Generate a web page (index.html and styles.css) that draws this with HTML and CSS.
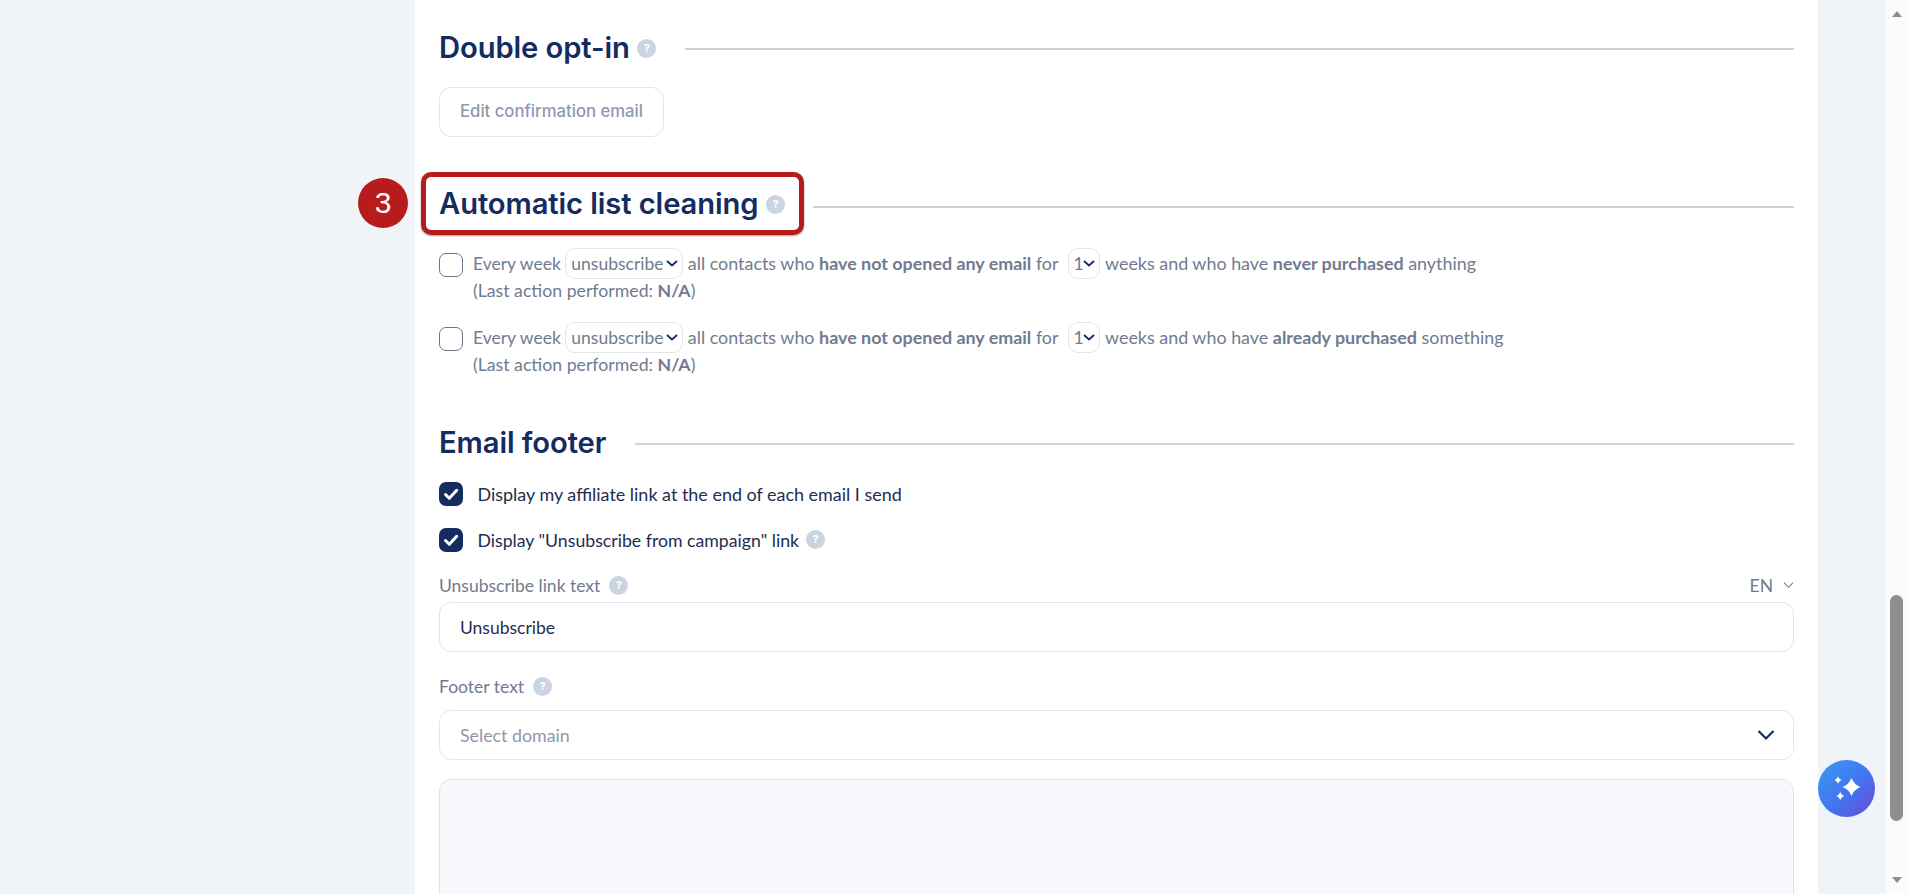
FILE: index.html
```html
<!DOCTYPE html>
<html lang="en">
<head>
<meta charset="utf-8">
<title>Email settings</title>
<link rel="stylesheet" href="styles.css">
</head>
<body>
<div class="page">
  <main class="card">
    <div class="heading first"><h2>Double opt-in</h2><span class="help">?</span><span class="rule"></span></div>
    <button class="btn"><span>Edit confirmation email</span></button>

    <div class="heading second"><h2>Automatic list cleaning</h2><span class="help">?</span><span class="rule"></span>
      <span class="marker"></span><span class="badge">3</span>
    </div>

    <div class="clean-row">
      <span class="check"></span>
      <div class="clean-text">
        <div class="line"><span class="lead">Every week</span><select class="sel sel-action"><option>unsubscribe</option></select><span>all contacts who <b>have not opened any email</b> for</span><select class="sel sel-num"><option>1</option></select><span>weeks and who have <b>never purchased</b> anything</span></div>
        <div class="line2">(Last action performed: <b>N/A</b>)</div>
      </div>
    </div>
    <div class="clean-row next">
      <span class="check"></span>
      <div class="clean-text">
        <div class="line"><span class="lead">Every week</span><select class="sel sel-action"><option>unsubscribe</option></select><span>all contacts who <b>have not opened any email</b> for</span><select class="sel sel-num"><option>1</option></select><span>weeks and who have <b>already purchased</b> something</span></div>
        <div class="line2">(Last action performed: <b>N/A</b>)</div>
      </div>
    </div>

    <div class="heading third"><h2>Email footer</h2><span class="rule"></span></div>

    <div class="opt">
      <span class="check on"><svg viewBox="0 0 24 24" width="24" height="24"><path d="M6.500 12.500l3.800 3.800 7.400-8" fill="none" stroke="#fff" stroke-width="3" stroke-linecap="round" stroke-linejoin="round"/></svg></span>
      <span>Display my affiliate link at the end of each email I send</span>
    </div>
    <div class="opt tight">
      <span class="check on"><svg viewBox="0 0 24 24" width="24" height="24"><path d="M6.500 12.500l3.800 3.800 7.400-8" fill="none" stroke="#fff" stroke-width="3" stroke-linecap="round" stroke-linejoin="round"/></svg></span>
      <span>Display "Unsubscribe from campaign" link</span><span class="help">?</span>
    </div>

    <div class="label-row">
      <span class="label">Unsubscribe link text</span><span class="help">?</span>
      <span class="lang">EN <svg viewBox="0 0 12 8" width="11" height="8"><path d="M1 1.500l5 5 5-5" fill="none" stroke="#707b90" stroke-width="1.200"/></svg></span>
    </div>
    <div class="field">Unsubscribe</div>

    <div class="label-row footer-label">
      <span class="label">Footer text</span><span class="help">?</span>
    </div>
    <div class="field domain">
      <span>Select domain</span>
      <svg viewBox="0 0 18 12" width="18" height="12"><path d="M1.500 2l7.500 7.500L16.500 2" fill="none" stroke="#142c5f" stroke-width="2.200"/></svg>
    </div>
    <div class="textarea"></div>
  </main>
  <div class="margin"></div>
  <aside class="scrollbar">
    <span class="arrow up"></span>
    <span class="thumb"></span>
    <span class="arrow down"></span>
  </aside>
</div>
<button class="spark" aria-label="AI assistant">
  <svg viewBox="0 0 57 57" width="57" height="57">
    <path d="M33.500 18Q36 24.500 42.500 27 36 29.500 33.500 36 31 29.500 24.500 27 31 24.500 33.500 18z" fill="#fff"/>
    <path d="M20 16.500Q21 19 23.500 20 21 21 20 23.500 19 21 16.500 20 19 19 20 16.500z" fill="#fff"/>
    <path d="M22.300 32Q23.300 35 26.300 36 23.300 37 22.300 40 21.300 37 18.300 36 21.300 35 22.300 32z" fill="#fff"/>
  </svg>
</button>
</body>
</html>
```
FILE: styles.css
```css
* { box-sizing: border-box; }
html, body { margin: 0; height: 894px; overflow: hidden; }
body { background: #f0f4f9; font-family: "Lato", "Noto Sans", sans-serif; }
.page { display: flex; height: 894px; padding-left: 415px; overflow: hidden; }
.card { width: 1403px; height: 894px; background: #fff; padding: 29px 24px 0; flex: none; }
.margin { width: 67px; flex: none; }
.heading { display: flex; align-items: center; height: 36px; position: relative; }
.heading h2 { margin: 0; padding-top: 2px; font: 600 29.200px/36px "Inter", sans-serif; color: #142c5f; letter-spacing: -0.1px; }
.heading .help { margin-left: 7.500px; margin-top: 2px; }
.rule { flex: 1; height: 2px; background: #cbd5e1; margin: 4px 0 0 28.500px; }
.second { margin-top: 48px; }
.second .rule { margin-top: 8px; }
.third { margin-top: 45px; }
.help { width: 19px; height: 19px; border-radius: 50%; background: #cbd5e1; color: #fff; font: 700 11px/19px "Inter", sans-serif; text-align: center; flex: none; }
.btn { display: block; width: 225px; height: 50px; margin-top: 22px; background: #fff; border: 1px solid #e2e5ea; border-radius: 12px; font: 500 16.700px "Inter", sans-serif; color: #8f98b0; padding: 0 0 2px; }
.marker { position: absolute; left: -18px; top: -13px; width: 383px; height: 63px; border: 5px solid #b71c1c; border-radius: 10px; box-shadow: 0 1px 2px rgba(0,0,0,.4); }
.badge { position: absolute; left: -81px; top: -7px; width: 50px; height: 50px; border-radius: 50%; background: #b71c1c; color: #fff; font: 400 30px/50px "Liberation Sans", sans-serif; text-align: center; }
.clean-row { display: flex; margin-top: 27px; font-size: 17.900px; color: #707b90; }
.clean-row.next { margin-top: 17px; }
.check { width: 24px; height: 24px; border: 1.500px solid #6b7687; border-radius: 7px; flex: none; margin-top: 5px; background: #fff; }
.check.on { background: #142c5f; border: 0; margin-top: 0; }
.check svg { display: block; }
.clean-text { margin-left: 10px; }
.line { height: 31px; line-height: 31px; display: flex; align-items: center; gap: 4.500px; white-space: nowrap; }
.lead { font-size: 17.500px; }
.line b, .line2 b { font-weight: 700; }
.line2 { height: 26px; line-height: 24px; font-size: 17.700px; }
.sel { appearance: none; height: 31px; background: #fff url("data:image/svg+xml,%3Csvg xmlns='http://www.w3.org/2000/svg' width='12' height='7'%3E%3Cpath d='M1 1l5 4.500L11 1' fill='none' stroke='%23142c5f' stroke-width='1.800'/%3E%3C/svg%3E") no-repeat right 4px center; border: 1px solid #e2e5ea; border-radius: 10px; font: 400 17.500px "Lato", sans-serif; color: #707b90; padding: 0 0 0 5px; margin: 0; }
.sel-action { width: 118px; }
.sel-num { width: 32px; margin: 0 1px 0 4.500px; }
.opt { display: flex; align-items: center; height: 24px; margin-top: 22px; font-size: 17.950px; color: #1f2d4f; }
.opt.tight { font-size: 17.700px; }
.opt .check { margin-right: 14.500px; }
.opt .help { margin-left: 7px; margin-top: -2px; }
.label-row { display: flex; align-items: center; height: 24px; margin-top: 21px; font-size: 17.500px; color: #707b90; }
.label-row .help { margin-left: 9px; }
.lang { margin-left: auto; display: flex; align-items: center; gap: 10px; }
.footer-label { margin-top: 22px; }
.field { height: 50px; margin-top: 5px; padding: 0 20px; border: 1px solid #e2e5ea; border-radius: 12px; display: flex; align-items: center; font-size: 17.500px; color: #1f2d4f; }
.domain { margin-top: 12px; justify-content: space-between; color: #8f98a8; font-size: 17.800px; }
.domain svg { margin-right: -2px; }
.textarea { height: 200px; margin-top: 19px; background: #f6f8fb; border: 1px solid #dfe3e8; border-radius: 12px; }
.scrollbar { width: 23px; height: 894px; background: #fbfbfb; flex: none; display: flex; flex-direction: column; align-items: center; padding: 11px 0 0; }
.thumb { width: 13px; height: 226px; margin-top: 578px; background: #8e8e8e; border-radius: 7px; }
.arrow { width: 0; height: 0; border-left: 5.500px solid transparent; border-right: 5.500px solid transparent; flex: none; }
.arrow.up { border-bottom: 6px solid #8e8e8e; }
.arrow.down { border-top: 6px solid #8e8e8e; margin-top: 56px; }
.spark { position: fixed; left: 1818px; top: 760px; width: 57px; height: 57px; padding: 0; border: 0; border-radius: 50%; background: linear-gradient(135deg, #3b9bef 0%, #4274f3 55%, #6d48cf 100%); }
.spark svg { display: block; }
```
